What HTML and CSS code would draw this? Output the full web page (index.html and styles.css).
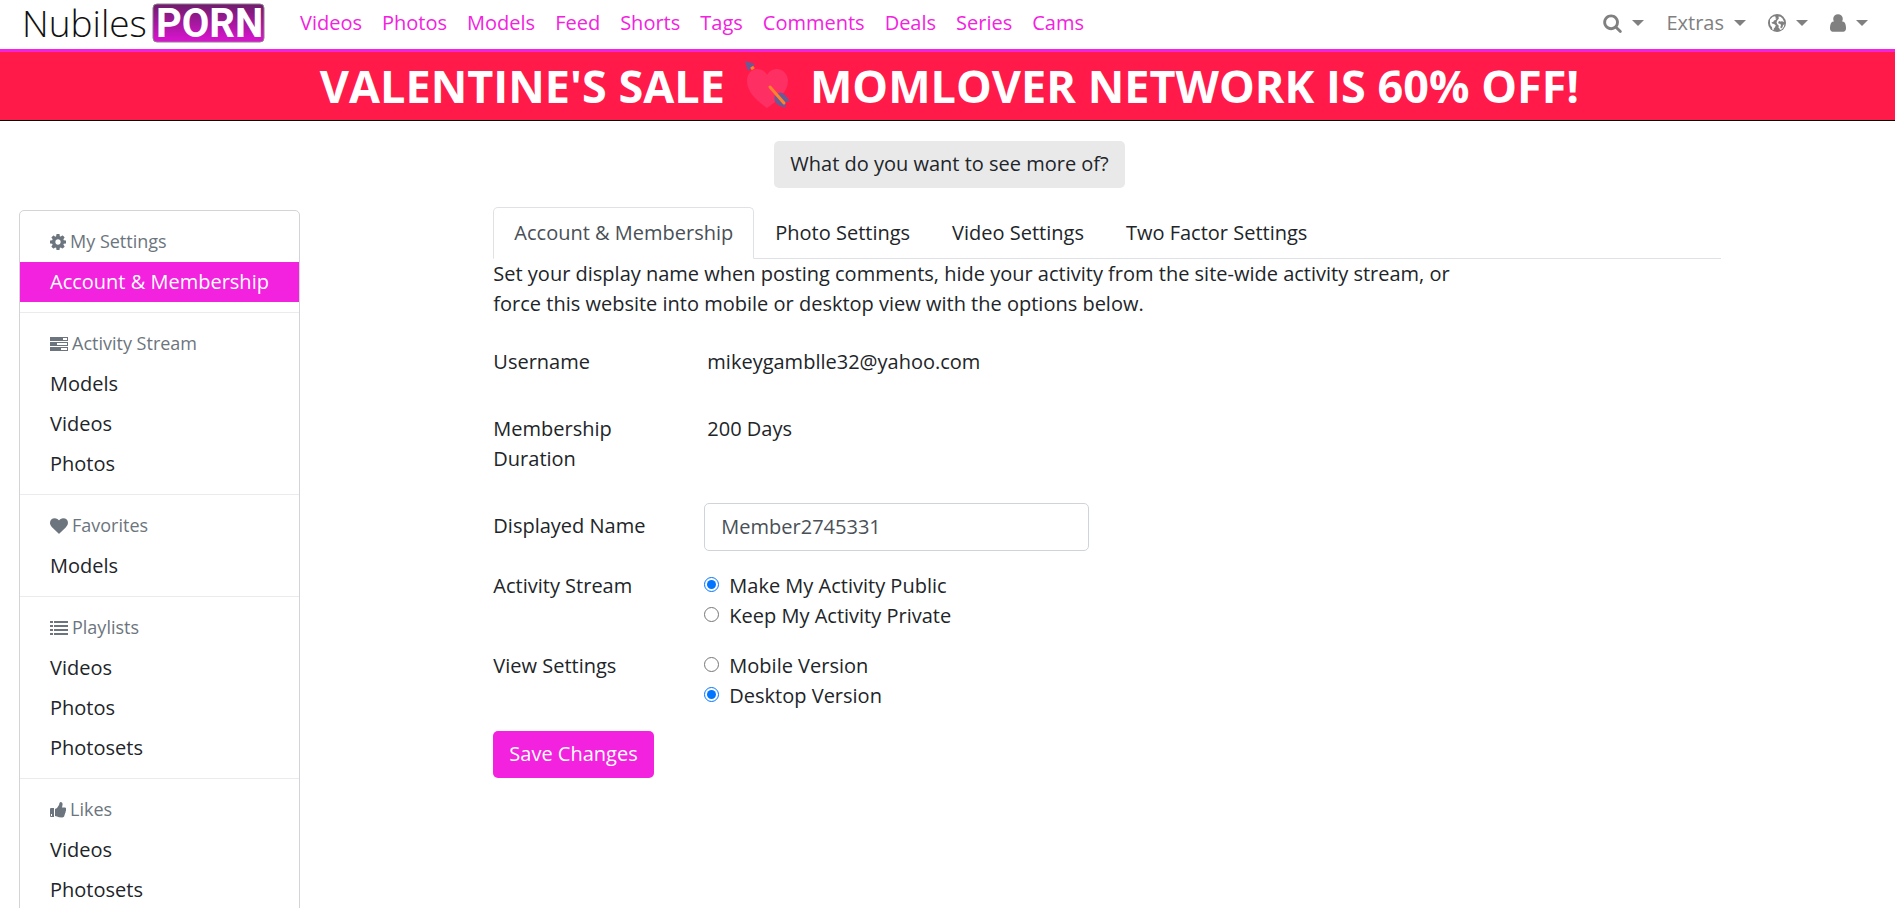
FILE: index.html
```html
<!DOCTYPE html>
<html lang="en">
<head>
  <meta charset="utf-8">
  <title>Account &amp; Membership</title>
  <link rel="stylesheet" href="styles.css">
</head>

<body>
  <header class="navbar">
    <a class="brand" href="#" aria-label="Home">
      <svg width="244" height="49" viewBox="0 0 244 49">
        <defs>
          <linearGradient id="badge" x1="0" y1="0" x2="0" y2="1">
            <stop offset="0" stop-color="#6e1c6a"/>
            <stop offset="1" stop-color="#dc14d2"/>
          </linearGradient>
        </defs>
        <text class="brand-thin" x="-2" y="37">Nubiles</text>
        <rect x="129" y="4" width="111" height="38" rx="4" fill="url(#badge)" stroke="#8f7f8f"/>
        <text class="brand-bold" x="132" y="37">PORN</text>
      </svg>
    </a>
    <nav class="nav-links">
      <a href="#">Videos</a>
      <a href="#">Photos</a>
      <a href="#">Models</a>
      <a href="#">Feed</a>
      <a href="#">Shorts</a>
      <a href="#">Tags</a>
      <a href="#">Comments</a>
      <a href="#">Deals</a>
      <a href="#">Series</a>
      <a href="#">Cams</a>
    </nav>
    <div class="nav-tools">
      <button type="button" aria-label="Search">
        <svg width="19" height="20" viewBox="0 0 1664 1792"><path d="M1152 832q0-185-131.500-316.500T704 384 387.500 515.500 256 832t131.500 316.500T704 1280t316.500-131.500T1152 832zm512 832q0 52-38 90t-90 38q-54 0-90-38l-343-342q-179 124-399 124-143 0-273.500-55.500t-225-150-150-225T0 832t55.500-273.500 150-225 225-150T704 128t273.500 55.500 225 150 150 225T1408 832q0 220-124 399l343 343q37 37 37 90z"/></svg>
      </button>
      <button type="button">Extras</button>
      <button type="button" aria-label="Sites">
        <svg width="18" height="18" viewBox="0 0 18 18"><circle cx="9" cy="9" r="9"/><path fill="#fff" d="M2 5.500L4.500 3l2-.8 1.500.8-1 1.200 1.500.3-1 1.500-1.500.5-.8 1.500-1.700.3.500 1.200 2 .5 1.800 1.300-.8 2-1.200 1.200-.3 1.800-1.200-.8-.3-2.200L2.500 11.500 2 9.500zM10.500 2.500l2 .3 2 1.700 1.500 3-.8.500-1.200-1-1 .8-1.500-.8-1.300 1 .3 1.500 2 .5.5 1.700-.8 1.300.8 1.500 1.500-1.200.5-1.800 1.300-1.500-.3 2.500-2 2.800-2 .8-.5-1.600-1-.8.3-2-1.500-1.500-.8-2 1-2.200 1.300-1.200z"/></svg>
      </button>
      <button type="button" aria-label="Account">
        <svg width="16" height="18" viewBox="0 0 1280 1408"><path d="M1280 1137q0 109-62.500 187T1067 1402H213q-88 0-150.500-78T0 1137q0-85 8.500-160.500t31.500-152T98.500 693t94-89T327 569q131 128 313 128t313-128q76 0 134.500 35t94 89 58.500 131.500 31.500 152 8.500 160.500zM1024 384q0 159-112.500 271.500T640 768 368.500 655.500 256 384t112.500-271.500T640 0t271.500 112.500T1024 384z"/></svg>
      </button>
    </div>
  </header>

  <a class="banner" href="#">VALENTINE'S SALE
    <svg class="heart-arrow" width="45" height="50" viewBox="0 0 45 50">
      <path fill="#fe2f62" d="M22 47C12 40 2 31 2 20 2 12 7 8 12 8c4 0 8 2 10 6 2-4 6-6 10-6 6 0 11 5 11 12 0 11-11 20-21 27z"/>
      <path fill="#6b5b95" d="M0 0l10 3-7 7z"/>
      <path stroke="#ff822d" stroke-width="3" d="M6 8l3-2"/>
      <path fill="#6b5b95" d="M30 34q6-5 10 0l5 6-4 1-1 6-7-3q-5-4-3-10z"/>
      <path stroke="#ff822d" stroke-width="3" stroke-linecap="round" d="M25 26l14 16"/>
    </svg>
    MOMLOVER NETWORK IS 60% OFF!</a>

  <div class="survey">
    <button type="button" class="btn btn-light">What do you want to see more of?</button>
  </div>

  <div class="layout">
    <aside class="sidebar">
      <div class="group">
        <h6><svg width="16" height="16" viewBox="0 0 1536 1536"><path d="M1024 768q0-106-75-181t-181-75-181 75-75 181 75 181 181 75 181-75 75-181zm512-109v222q0 12-8 23t-20 13l-185 28q-19 54-39 91 35 50 107 138 10 12 10 25t-9 23q-27 37-99 108t-94 71q-12 0-26-9l-138-108q-44 23-91 38-16 136-29 186-7 28-36 28H657q-14 0-24.500-8.500T621 1506l-28-184q-49-16-90-37l-141 107q-10 9-25 9-14 0-25-11-126-114-165-168-7-10-7-23 0-12 8-23 15-21 51-66.500t54-70.500q-27-50-41-99L29 913q-13-2-21-12.500T0 877V655q0-12 8-23t19-13l186-28q14-46 39-92-40-57-107-138-10-12-10-24 0-10 9-23 26-36 98.500-107.500T337 135q13 0 26 10l138 107q44-23 91-38 16-136 29-186 7-28 36-28h222q14 0 24.500 8.500T915 30l28 184q49 16 90 37l142-107q9-9 24-9 13 0 25 10 129 119 165 170 7 8 7 22 0 12-8 23-15 21-51 66.500t-54 70.500q26 50 41 98l183 28q13 2 21 12.500t8 23.500z"/></svg> My Settings</h6>
        <a class="active" href="#">Account &amp; Membership</a>
      </div>
      <div class="group">
        <h6><svg width="18" height="14" viewBox="0 0 18 14"><path fill-rule="evenodd" d="M0 0h18v4H0zM0 5h18v4H0zM0 10h18v4H0zM13 1v2h4V1zM7 6v2h10V6zM11 11v2h6v-2z"/></svg> Activity Stream</h6>
        <a href="#">Models</a>
        <a href="#">Videos</a>
        <a href="#">Photos</a>
      </div>
      <div class="group">
        <h6><svg width="18" height="16" viewBox="0 0 1792 1536"><path d="M896 1536q-26 0-44-18l-624-602q-10-8-27.500-26T145 824.500 77 727 23.500 606 0 468q0-220 127-344T478 0q62 0 126.500 21.500t120 58T820 148t76 68q36-36 76-68t95.500-68.500 120-58T1314 0q224 0 351 124t127 344q0 221-229 450l-623 600q-18 18-44 18z"/></svg> Favorites</h6>
        <a href="#">Models</a>
      </div>
      <div class="group">
        <h6><svg width="18" height="14" viewBox="0 0 18 14"><path d="M0 0h3v2H0zM4 0h14v2H4zM0 4h3v2H0zM4 4h14v2H4zM0 8h3v2H0zM4 8h14v2H4zM0 12h3v2H0zM4 12h14v2H4z"/></svg> Playlists</h6>
        <a href="#">Videos</a>
        <a href="#">Photos</a>
        <a href="#">Photosets</a>
      </div>
      <div class="group">
        <h6><svg width="16" height="16" viewBox="0 0 16 16"><path fill-rule="evenodd" d="M0 7q0-1 1-1h3v9H1q-1 0-1-1zM1 12v2h1v-2zM5 7l2-1 2-3 .5-2q.3-1 1.500-1 2 .5 1.500 3L12 5.500h3q1.500.5 1 2 .2 1-.4 1.800.2 1-.5 1.900 0 1-.6 1.600Q14.500 15.500 12 15.500q-3.500 0-5-1L5 14z"/></svg> Likes</h6>
        <a href="#">Videos</a>
        <a href="#">Photosets</a>
      </div>
    </aside>

    <main class="content">
      <nav class="tabs">
        <a class="active" href="#">Account &amp; Membership</a>
        <a href="#">Photo Settings</a>
        <a href="#">Video Settings</a>
        <a href="#">Two Factor Settings</a>
      </nav>
      <p class="intro">Set your display name when posting comments, hide your activity from the site-wide activity stream, or force this website into mobile or desktop view with the options below.</p>

      <form class="settings">
        <div class="row">
          <span class="label">Username</span>
          <span class="value">mikeygamblle32@yahoo.com</span>
        </div>
        <div class="row">
          <span class="label">Membership Duration</span>
          <span class="value">200 Days</span>
        </div>
        <div class="row">
          <label class="label" for="displayName">Displayed Name</label>
          <input type="text" id="displayName" class="text-input" value="Member2745331">
        </div>
        <div class="row" role="radiogroup" aria-labelledby="activityLabel">
          <span id="activityLabel">Activity Stream</span>
          <div>
            <label class="radio"><input type="radio" name="activity" checked>Make My Activity Public</label>
            <label class="radio"><input type="radio" name="activity">Keep My Activity Private</label>
          </div>
        </div>
        <div class="row" role="radiogroup" aria-labelledby="viewLabel">
          <span id="viewLabel">View Settings</span>
          <div>
            <label class="radio"><input type="radio" name="view">Mobile Version</label>
            <label class="radio"><input type="radio" name="view" checked>Desktop Version</label>
          </div>
        </div>
        <button type="submit" class="btn btn-primary">Save Changes</button>
      </form>
    </main>
  </div>
</body>
</html>
```

FILE: styles.css
```css
* {box-sizing: border-box;}
html {overflow: hidden;}
body {margin: 0; font-family: 'Open Sans', sans-serif; font-size: 20px; line-height: 30px; color: #212529; background-color: #fff;}
a {color: inherit; text-decoration: none;}
button, input {font: inherit; color: inherit;}
svg {fill: currentColor;}

/* top bar */
.navbar {display: flex; align-items: center; height: 52px; padding: 0 27px 0 24px; border-bottom: 3px solid #f222df;}
.brand {display: flex;}
.brand svg {overflow: visible;}
.brand-thin {font-family: 'Open Sans', sans-serif; font-weight: 300; font-size: 37px; fill: #111;}
.brand-bold {font-family: Roboto, sans-serif; font-weight: 700; font-size: 40px; fill: #fff;}
.nav-links {display: flex; gap: 20px; margin-left: 32px; padding-bottom: 4px; color: #f222df;}
.nav-tools {display: flex; gap: 22px; margin-left: auto; padding-bottom: 4px;}
.nav-tools button {display: flex; align-items: center; gap: 10px; padding: 0; border: none; background: none; color: #808080; cursor: pointer;}
.nav-tools button::after {content: ''; border: 6px solid transparent; border-top-color: #808080; border-bottom: none;}

.banner {display: flex; justify-content: center; align-items: center; gap: 20px; padding-left: 4px; border-bottom: 1px solid #000; background-color: #ff1a49; color: #fff; font-size: 45px; line-height: 68px; font-weight: 700;}
.heart-arrow {fill: none;}

.survey {padding: 20px 0 19px 4px; text-align: center;}
.btn {padding: 8px 16px 9px; border: none; border-radius: 5px; cursor: pointer;}
.btn-light {background-color: #e9e9e9;}
.btn-primary {background-color: #f222df; color: #fff;}

.layout {display: flex; align-items: flex-start;}

/* sidebar */
.sidebar {width: 281px; flex: none; margin: 3px 19px 0; border: 1px solid #d3d4d6; border-radius: 5px;}
.group {padding: 10px 0;}
.group + .group {border-top: 1px solid #e9ecef;}
.group h6 {display: flex; align-items: center; gap: 4px; margin: 0; padding: 10px 30px; font-size: 18px; line-height: 21px; font-weight: 400; color: #6c757d;}
.group a {display: block; padding: 5px 30px;}
.group .active {background-color: #f222df; color: #fff;}

/* settings */
.content {flex: 1; padding: 0 9.2%;}
.tabs {display: flex; border-bottom: 1px solid #dee2e6;}
.tabs a {margin-bottom: -1px; padding: 10px 20px; border: 1px solid transparent; border-radius: 5px 5px 0 0;}
.tabs .active {border-color: #dee2e6 #dee2e6 #fff; background-color: #fff; color: #495057;}
.intro {max-width: 80%; margin: 0 0 20px;}
.row {display: grid; grid-template-columns: 160px 385px; column-gap: 51px; margin-bottom: 20px;}
.label {padding: 8px 0 9px;}
.value {padding: 8px 3px 9px;}
.text-input {padding: 8px 16px; border: 1px solid #ced4da; border-radius: 5px; color: #495057;}
.radio {display: flex; align-items: center; gap: 10px;}
.radio input {width: 15px; height: 15px; margin: 0 0 3px;}
```
